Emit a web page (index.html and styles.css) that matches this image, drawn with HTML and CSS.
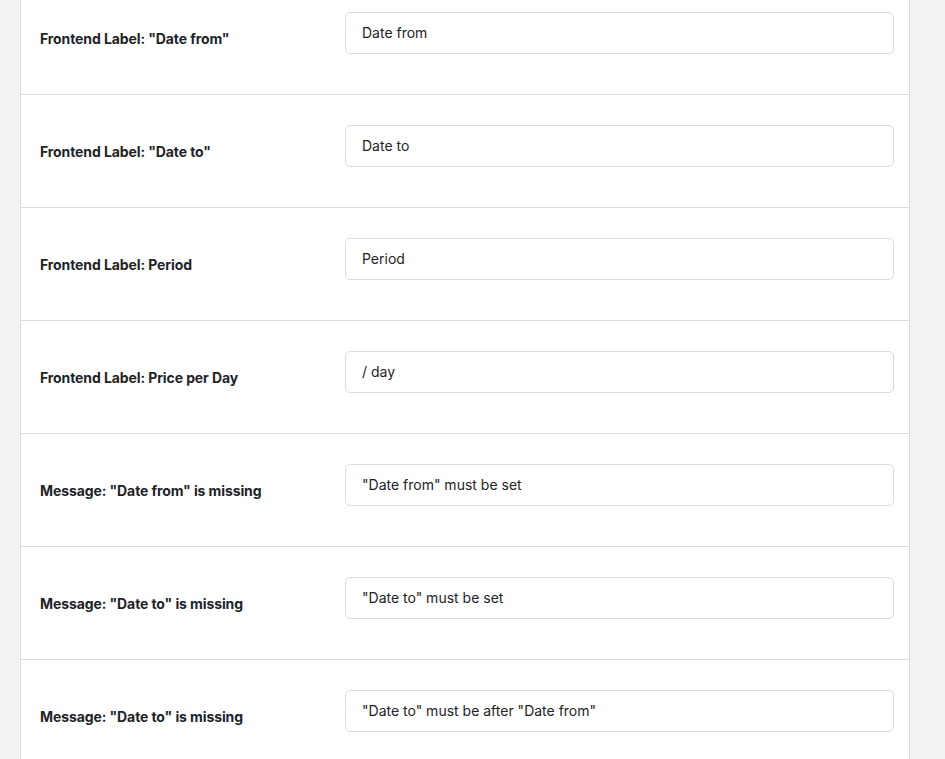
FILE: index.html
```html
<!DOCTYPE html>
<html>
<head>
<meta charset="utf-8">
<link rel="stylesheet" href="styles.css">
</head>
<body>
<div class="panel">
  <div class="row"><div class="label">Frontend Label: "Date from"</div><div class="field"><input class="input" type="text" value="Date from"></div></div>
  <div class="row"><div class="label">Frontend Label: "Date to"</div><div class="field"><input class="input" type="text" value="Date to"></div></div>
  <div class="row"><div class="label">Frontend Label: Period</div><div class="field"><input class="input" type="text" value="Period"></div></div>
  <div class="row"><div class="label">Frontend Label: Price per Day</div><div class="field"><input class="input" type="text" value="/ day"></div></div>
  <div class="row"><div class="label">Message: "Date from" is missing</div><div class="field"><input class="input" type="text" value="&quot;Date from&quot; must be set"></div></div>
  <div class="row"><div class="label">Message: "Date to" is missing</div><div class="field"><input class="input" type="text" value="&quot;Date to&quot; must be set"></div></div>
  <div class="row"><div class="label">Message: "Date to" is missing</div><div class="field"><input class="input" type="text" value="&quot;Date to&quot; must be after &quot;Date from&quot;"></div></div>
</div>
</body>
</html>
```
FILE: styles.css
```css
html, body {
  margin: 0;
  padding: 0;
  background: #f1f2f4;
  font-family: Inter, "Noto Sans", sans-serif;
  color: #1e2328;
  overflow: hidden;
}
.panel {
  margin-top: -18px;
  margin-left: 20px;
  width: 888px;
  background: #fff;
  border-left: 1px solid #dcdcde;
  border-right: 1px solid #dcdcde;
}
.row {
  display: flex;
  height: 112px;
  border-bottom: 1px solid #dcdcde;
  box-sizing: content-box;
}
.label {
  width: 305px;
  padding-left: 19px;
  padding-top: 47px;
  font-size: 14px;
  font-weight: 700;
  line-height: 20px;
  letter-spacing: -0.1px;
}
.field {
  flex: 1;
  padding-top: 30px;
  padding-right: 15px;
}
.input {
  display: block;
  width: 100%;
  height: 42px;
  box-sizing: border-box;
  border: 1px solid #dcdcde;
  border-radius: 5px;
  padding: 0 16px 2px 16px;
  font-family: Inter, "Noto Sans", sans-serif;
  font-size: 14px;
  color: #1e2328;
  background: #fff;
  outline: none;
  margin-top: 0;
}
```
